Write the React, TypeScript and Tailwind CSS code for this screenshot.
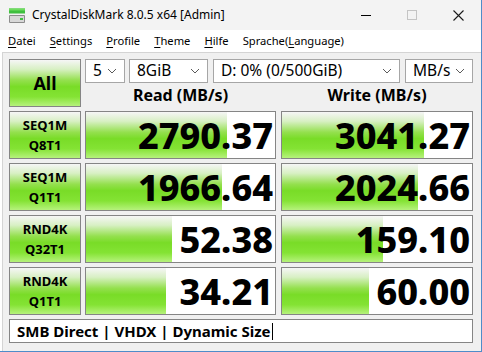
import { ReactNode } from "react";

const font = { fontFamily: '"Noto Sans", "Open Sans", sans-serif' };

const fill =
  "bg-[linear-gradient(to_bottom,#f6f6f6_0%,#d8f0c4_20%,#94e04e_44%,#79dc27_58%,#84e334_80%,#b6f27c_100%)]";

function Chevron() {
  return (
    <svg width="10" height="6" viewBox="0 0 10 6" className="shrink-0">
      <path d="M1 1 L5 5 L9 1" fill="none" stroke="#5a5a5a" strokeWidth="1" />
    </svg>
  );
}

function Combo({ w, text }: { w: string; text: string }) {
  return (
    <div className={`${w} h-[24px] flex items-center justify-between bg-white border border-[#a6a6a6] pl-[7px] pr-[7px] text-[15.5px] text-black`}>
      <span className="leading-none">{text}</span>
      <Chevron />
    </div>
  );
}

function Label({ a, b }: { a: string; b: string }) {
  return (
    <div className={`w-[72px] h-[48px] shrink-0 border border-[#858585] ${fill} flex flex-col items-center justify-center text-[13px] font-bold leading-[20px] text-black`}>
      <span>{a}</span>
      <span>{b}</span>
    </div>
  );
}

function Cell({ w, bar, value }: { w: string; bar: number; value: string }) {
  return (
    <div className={`${w} h-[48px] shrink-0 border border-[#858585] bg-white relative`}>
      <div className={`absolute left-0 top-0 bottom-0 ${fill}`} style={{ width: bar }} />
      <div className="relative h-full flex items-center justify-end pr-[2px] pt-[1px] text-[36px] font-extrabold text-black leading-none">
        {value}
      </div>
    </div>
  );
}

function Row({ a, b, r, rb, wv, wb }: { a: string; b: string; r: string; rb: number; wv: string; wb: number }) {
  return (
    <div className="flex">
      <Label a={a} b={b} />
      <div className="ml-[4px]">
        <Cell w="w-[191px]" bar={rb} value={r} />
      </div>
      <div className="ml-[5px]">
        <Cell w="w-[192px]" bar={wb} value={wv} />
      </div>
    </div>
  );
}

function MenuItem({ first, rest }: { first: string; rest: ReactNode }) {
  return (
    <span>
      <span className="underline underline-offset-[2px]">{first}</span>
      {rest}
    </span>
  );
}

function AppIcon() {
  return (
    <svg width="18" height="16" viewBox="0 0 18 16">
      <rect x="1" y="0.5" width="16" height="5" fill="#3fbf3f" />
      <rect x="1" y="0.5" width="16" height="2" fill="#6fdc5f" />
      <rect x="1" y="7" width="16" height="8" rx="1" fill="#8c8c8c" />
      <rect x="2" y="8" width="14" height="6" fill="#d8d8d8" />
      <rect x="12" y="10" width="3" height="2" fill="#3fbf3f" />
    </svg>
  );
}

export default function App() {
  return (
    <div
      className="w-[482px] h-[352px] flex flex-col bg-white border-r border-b border-[#4f8cc9] overflow-hidden text-black"
      style={font}
    >
      {/* title bar */}
      <div className="h-[30px] shrink-0 bg-[#f3f3f3] flex items-center">
        <div className="ml-[8px] mt-[1px]">
          <AppIcon />
        </div>
        <span className="ml-[6px] text-[12px]">CrystalDiskMark 8.0.5 x64 [Admin]</span>
        <div className="ml-auto flex items-center">
          <div className="w-[46px] h-[30px] flex items-center justify-center">
            <div className="w-[10px] h-px bg-black" />
          </div>
          <div className="w-[46px] h-[30px] flex items-center justify-center">
            <div className="w-[10px] h-[10px] border border-[#c4c4c4]" />
          </div>
          <div className="w-[46px] h-[30px] flex items-center justify-center">
            <svg width="11" height="11" viewBox="0 0 11 11">
              <path d="M0.5 0.5 L10.5 10.5 M10.5 0.5 L0.5 10.5" stroke="#1a1a1a" strokeWidth="1.1" />
            </svg>
          </div>
        </div>
      </div>

      {/* menu bar */}
      <div className="h-[22px] shrink-0 bg-white flex items-center gap-[14px] pl-[8px] text-[11.2px]">
        <MenuItem first="D" rest="atei" />
        <MenuItem first="S" rest="ettings" />
        <MenuItem first="P" rest="rofile" />
        <MenuItem first="T" rest="heme" />
        <MenuItem first="H" rest="ilfe" />
        <span>
          Sprache(<span className="underline underline-offset-[2px]">L</span>anguage)
        </span>
      </div>

      {/* main */}
      <div className="flex-1 bg-white pl-[2px]">
        <div className="h-full bg-[#f0f0f0] border-l border-t border-[#d4d4d4] pl-[6px] pt-[6px] flex flex-col gap-[4px]">
          <div className="flex h-[48px]">
            <div className={`w-[72px] h-[48px] border border-[#858585] ${fill} flex items-center justify-center text-[18px] font-bold`}>
              All
            </div>
            <div className="ml-[4px] flex flex-col">
              <div className="flex">
                <Combo w="w-[40px]" text="5" />
                <div className="ml-[4px]">
                  <Combo w="w-[79px]" text="8GiB" />
                </div>
                <div className="ml-[5px]">
                  <Combo w="w-[187px]" text="D: 0% (0/500GiB)" />
                </div>
                <div className="ml-[5px]">
                  <Combo w="w-[68px]" text="MB/s" />
                </div>
              </div>
              <div className="flex flex-1 items-center text-[16px] font-bold">
                <div className="w-[191px] text-center">Read (MB/s)</div>
                <div className="ml-[5px] w-[192px] text-center">Write (MB/s)</div>
              </div>
            </div>
          </div>

          <Row a="SEQ1M" b="Q8T1" r="2790.37" rb={141} wv="3041.27" wb={142} />
          <Row a="SEQ1M" b="Q1T1" r="1966.64" rb={136} wv="2024.66" wb={136} />
          <Row a="RND4K" b="Q32T1" r="52.38" rb={86} wv="159.10" wb={101} />
          <Row a="RND4K" b="Q1T1" r="34.21" rb={80} wv="60.00" wb={87} />

          <div className="w-[464px] h-[24px] bg-white border border-[#858585] flex items-center pl-[7px] text-[15px] font-bold">
            <span>SMB Direct | VHDX | Dynamic Size</span>
            <span className="ml-[1px] w-px h-[17px] bg-black" />
          </div>
        </div>
      </div>
    </div>
  );
}
